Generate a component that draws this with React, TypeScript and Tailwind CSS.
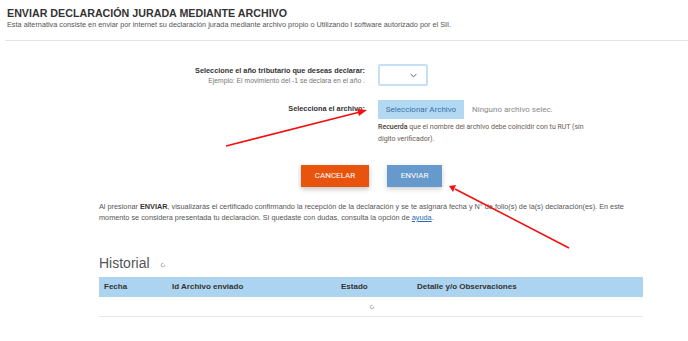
import React from 'react'

const Spinner = ({ className }: { className?: string }) => (
  <svg viewBox="0 0 10 10" className={className} fill="none">
    <path d="M8 5 A3 3 0 1 1 5 2" stroke="#9a9a9a" strokeWidth="1.3" strokeLinecap="round" />
  </svg>
)

const App = () => {
  return (
    <div className="relative w-[688px] h-[341px] bg-white overflow-hidden font-['Liberation_Sans',Arial,sans-serif]">
      {/* encabezado */}
      <div className="pl-[7px] pt-[7px]">
        <h1 className="text-[10.7px] leading-[13px] font-bold text-[#333]">ENVIAR DECLARACIÓN JURADA MEDIANTE ARCHIVO</h1>
        <p className="text-[7.3px] leading-[10px] text-[#555]">
          Esta alternativa consiste en enviar por internet su declaración jurada mediante archivo propio o Utilizando l software autorizado por el SII.
        </p>
      </div>
      <div className="ml-[5px] mt-[10px] border-t border-[#e5e5e5]"></div>

      {/* formulario */}
      <div className="mt-[23px] flex">
        <div className="w-[365px] text-right pt-[1px]">
          <div className="text-[7.3px] leading-[11px] font-bold text-[#333]">Seleccione el año tributario que deseas declarar:</div>
          <div className="text-[6.8px] leading-[10px] text-[#777]">Ejemplo: El movimiento del -1 se declara en el año .</div>
        </div>
        <div className="ml-[13px] w-[50px] h-[22px] border-2 border-[#c5e0f4] rounded-[2px] flex items-center justify-end pr-[9px]">
          <svg viewBox="0 0 10 6" className="w-[7px] h-[5px]" fill="none">
            <path d="M1 1 L5 5 L9 1" stroke="#555" strokeWidth="1.4" />
          </svg>
        </div>
      </div>

      <div className="mt-[14px] flex">
        <div className="w-[365px] text-right pt-[3px]">
          <div className="text-[7.3px] leading-[11px] font-bold text-[#333]">Selecciona el archivo:</div>
        </div>
        <div className="ml-[13px] w-[214px] font-['Roboto',sans-serif]">
          <div className="flex items-center">
            <button className="h-[19px] w-[86px] bg-[#b3d9f2] text-[#3a6fa8] text-[8px]">Seleccionar Archivo</button>
            <span className="ml-[8px] text-[8px] text-[#888]">Ninguno archivo selec.</span>
          </div>
          <p className="mt-[2px] text-[7px] leading-[12px] text-[#6b5a50]">
            <span className="font-medium text-[#4a3a30]">Recuerda</span> que el nombre del archivo debe coincidir con tu RUT (sin dígito verificador).
          </p>
        </div>
      </div>

      {/* botones */}
      <div className="mt-[20px] flex pl-[301px] gap-[18px] font-['Roboto',sans-serif]">
        <button className="w-[68px] h-[22px] bg-[#e8530e] text-white text-[8px] shadow-[0_2px_5px_rgba(0,0,0,0.25)]">CANCELAR</button>
        <button className="w-[55px] h-[22px] bg-[#6699cc] text-white text-[8px] shadow-[0_2px_5px_rgba(0,0,0,0.2)]">ENVIAR</button>
      </div>

      <div className="ml-[99px] w-[544px]">
        <p className="mt-[14px] text-[7.3px] leading-[11px] text-[#555]">
          Al presionar <b className="text-[#333]">ENVIAR</b>, visualizarás el certificado confirmando la recepción de la declaración y se te asignará fecha y N° de folio(s) de la(s) declaración(es). En este momento se considera presentada tu declaración. Si quedaste con dudas, consulta la opción de <a className="text-[#2a6ab0] underline">ayuda</a>.
        </p>

        <div className="mt-[32px] flex items-center">
          <h2 className="text-[14px] leading-[16px] text-[#555]">Historial</h2>
          <Spinner className="ml-[10px] mt-[4px] w-[6px] h-[6px]" />
        </div>

        <div className="mt-[6px] h-[20px] bg-[#acd3ef] flex items-center text-[8px] font-bold text-[#333]">
          <span className="pl-[5px] w-[73px]">Fecha</span>
          <span className="w-[169px]">Id Archivo enviado</span>
          <span className="w-[76px]">Estado</span>
          <span>Detalle y/o Observaciones</span>
        </div>
        <div className="h-[20px] flex items-center justify-center border-b border-[#e8e8e8]">
          <Spinner className="w-[6px] h-[6px] ml-[2px]" />
        </div>
      </div>

      {/* flechas rojas */}
      <svg className="absolute inset-0 pointer-events-none" width="688" height="341">
        <g stroke="#f01010" strokeWidth="1.6" fill="#f01010">
          <line x1="226" y1="146" x2="360" y2="112" />
          <polygon points="367,110 357,109 359,116" stroke="none" />
          <line x1="569" y1="248" x2="455" y2="189" />
          <polygon points="449,186 456,185 453,192" stroke="none" />
        </g>
      </svg>
    </div>
  )
}

export default App
